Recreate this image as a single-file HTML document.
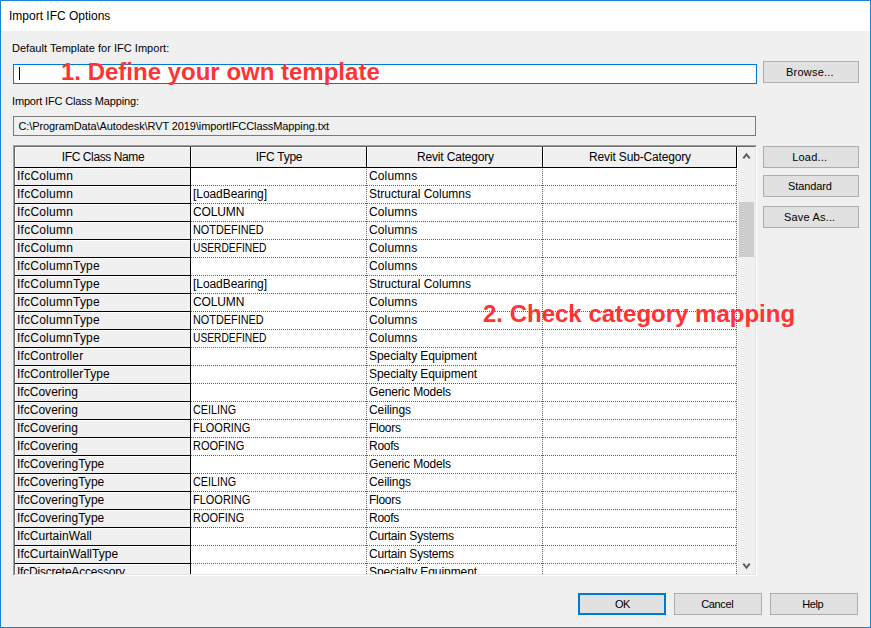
<!DOCTYPE html><html><head><meta charset="utf-8"><title>Import IFC Options</title><style>
html,body{margin:0;padding:0;}
body{width:871px;height:628px;overflow:hidden;background:#f0f0f0;font-family:"Liberation Sans",sans-serif;color:#000;}
.win{position:absolute;left:0;top:0;width:871px;height:628px;background:#f0f0f0;overflow:hidden;}
.win>*{position:absolute;}
.frame{left:0;top:0;width:869px;height:626px;border:1px solid #1883d7;pointer-events:none;z-index:10;}
.titlebar{left:1px;top:1px;width:869px;height:30px;background:#fff;}
.title{position:absolute;left:8px;top:8px;font-size:12px;line-height:14px;white-space:nowrap;}
.lbl{font-size:11px;line-height:14px;white-space:nowrap;}
.input{left:13px;top:64px;width:742px;height:18px;border:1px solid #0078d7;background:#fff;}
.caret{position:absolute;left:5px;top:2px;width:1px;height:13px;background:#000;}
.path{left:13px;top:116px;width:741px;height:18px;border:1px solid #7a7a7a;background:#f0f0f0;font-size:11px;line-height:18px;white-space:nowrap;}
.path span{position:absolute;left:4.5px;top:0;letter-spacing:-0.1px;}
.red{font-weight:bold;font-size:24px;line-height:28px;color:#ff3333;white-space:nowrap;z-index:5;}
.btn{height:22px;border:1px solid #adadad;background:#e1e1e1;font-size:11px;line-height:20px;text-align:center;box-sizing:border-box;}
.btn span{position:relative;display:inline-block;}
.btn.def{border:2px solid #0078d7;line-height:18px;}
.grid{left:13px;top:145px;width:742px;height:429px;border-style:solid;border-width:1px;border-color:#a0a0a0 #fff #fff #a0a0a0;}
.inner{position:absolute;left:0;top:0;width:740px;height:427px;border-style:solid;border-width:1px;border-color:#696969 #e3e3e3 #e3e3e3 #696969;background:#fff;overflow:hidden;}
.inner>*{position:absolute;}
.hdr{top:0;height:20px;background:#f0f0f0;border-right:1px solid #000;border-bottom:1px solid #000;box-shadow:inset 1px 1px 0 #fff;font-size:12px;line-height:20px;text-align:center;white-space:nowrap;}
.hdr span{display:inline-block;}
.row{left:0;width:723px;height:18px;font-size:12px;line-height:17px;white-space:nowrap;}
.row>div{position:absolute;top:0;height:17px;overflow:hidden;}
.row span{display:inline-block;}
.sx{transform-origin:0 50%;}
.c0{left:0;width:173px;padding-left:2px;background:#f0f0f0;border-right:1px solid #000;border-bottom:1px solid #000;box-shadow:inset 1px 1px 0 #fff;}
.c1,.c2{padding-left:2px;}
.c1{left:176px;width:173px;}
.c2{left:352px;width:173px;}
.dots{left:176px;top:21px;}
.sb{left:723px;top:0;width:17px;height:427px;background:#f0f0f0;}
.sb>*{position:absolute;}
.up{left:0;top:0;}
.down{left:0;bottom:-1px;}
.thumb{left:1px;top:55px;width:15px;height:55px;background:#cdcdcd;}

</style></head><body>
<div class="win"><div class="frame"></div>
<div class="titlebar"><span class="title">Import IFC Options</span></div>
<div class="lbl" style="left:12px;top:41px;letter-spacing:0.03px" id="l1">Default Template for IFC Import:</div>
<div class="input"><span class="caret"></span></div>
<div class="red" id="r1" style="left:61px;top:58px;">1. Define your own template</div>
<div class="btn" style="left:763px;top:61px;width:96px;"><span style="letter-spacing:0.2px;left:-1.1px">Browse...</span></div>
<div class="lbl" style="left:12px;top:94px;letter-spacing:-0.16px" id="l2">Import IFC Class Mapping:</div>
<div class="path"><span id="p1">C:\ProgramData\Autodesk\RVT 2019\importIFCClassMapping.txt</span></div>
<div class="grid">
<div class="inner">
<div class="hdr" style="left:0;width:175px;"><span style="letter-spacing:-0.4px;margin-left:1px">IFC Class Name</span></div>
<div class="hdr" style="left:176px;width:175px;"><span style="letter-spacing:-0.24px;margin-left:1px">IFC Type</span></div>
<div class="hdr" style="left:352px;width:175px;"><span style="letter-spacing:-0.18px;margin-left:2px">Revit Category</span></div>
<div class="hdr" style="left:528px;width:193px;"><span style="letter-spacing:-0.16px;margin-left:1px">Revit Sub-Category</span></div>
<div class="row" style="top:21px"><div class="c0"><span style="letter-spacing:0.24px">IfcColumn</span></div><div class="c1"></div><div class="c2"><span style="letter-spacing:0.13px">Columns</span></div></div>
<div class="row" style="top:39px"><div class="c0"><span style="letter-spacing:0.24px">IfcColumn</span></div><div class="c1"><span style="letter-spacing:-0.06px">[LoadBearing]</span></div><div class="c2"><span>Structural Columns</span></div></div>
<div class="row" style="top:57px"><div class="c0"><span style="letter-spacing:0.24px">IfcColumn</span></div><div class="c1"><span style="letter-spacing:-0.14px">COLUMN</span></div><div class="c2"><span style="letter-spacing:0.13px">Columns</span></div></div>
<div class="row" style="top:75px"><div class="c0"><span style="letter-spacing:0.24px">IfcColumn</span></div><div class="c1"><span class="sx" style="transform:scaleX(0.906)">NOTDEFINED</span></div><div class="c2"><span style="letter-spacing:0.13px">Columns</span></div></div>
<div class="row" style="top:93px"><div class="c0"><span style="letter-spacing:0.24px">IfcColumn</span></div><div class="c1"><span class="sx" style="transform:scaleX(0.854)">USERDEFINED</span></div><div class="c2"><span style="letter-spacing:0.13px">Columns</span></div></div>
<div class="row" style="top:111px"><div class="c0"><span style="letter-spacing:0.22px">IfcColumnType</span></div><div class="c1"></div><div class="c2"><span style="letter-spacing:0.13px">Columns</span></div></div>
<div class="row" style="top:129px"><div class="c0"><span style="letter-spacing:0.22px">IfcColumnType</span></div><div class="c1"><span style="letter-spacing:-0.06px">[LoadBearing]</span></div><div class="c2"><span>Structural Columns</span></div></div>
<div class="row" style="top:147px"><div class="c0"><span style="letter-spacing:0.22px">IfcColumnType</span></div><div class="c1"><span style="letter-spacing:-0.14px">COLUMN</span></div><div class="c2"><span style="letter-spacing:0.13px">Columns</span></div></div>
<div class="row" style="top:165px"><div class="c0"><span style="letter-spacing:0.22px">IfcColumnType</span></div><div class="c1"><span class="sx" style="transform:scaleX(0.906)">NOTDEFINED</span></div><div class="c2"><span style="letter-spacing:0.13px">Columns</span></div></div>
<div class="row" style="top:183px"><div class="c0"><span style="letter-spacing:0.22px">IfcColumnType</span></div><div class="c1"><span class="sx" style="transform:scaleX(0.854)">USERDEFINED</span></div><div class="c2"><span style="letter-spacing:0.13px">Columns</span></div></div>
<div class="row" style="top:201px"><div class="c0"><span style="letter-spacing:0.12px">IfcController</span></div><div class="c1"></div><div class="c2"><span style="letter-spacing:-0.07px">Specialty Equipment</span></div></div>
<div class="row" style="top:219px"><div class="c0"><span style="letter-spacing:0.13px">IfcControllerType</span></div><div class="c1"></div><div class="c2"><span style="letter-spacing:-0.07px">Specialty Equipment</span></div></div>
<div class="row" style="top:237px"><div class="c0"><span style="letter-spacing:0.02px">IfcCovering</span></div><div class="c1"></div><div class="c2"><span style="letter-spacing:-0.15px">Generic Models</span></div></div>
<div class="row" style="top:255px"><div class="c0"><span style="letter-spacing:0.02px">IfcCovering</span></div><div class="c1"><span class="sx" style="transform:scaleX(0.896)">CEILING</span></div><div class="c2"><span style="letter-spacing:-0.1px">Ceilings</span></div></div>
<div class="row" style="top:273px"><div class="c0"><span style="letter-spacing:0.02px">IfcCovering</span></div><div class="c1"><span class="sx" style="transform:scaleX(0.915)">FLOORING</span></div><div class="c2"><span style="letter-spacing:-0.28px">Floors</span></div></div>
<div class="row" style="top:291px"><div class="c0"><span style="letter-spacing:0.02px">IfcCovering</span></div><div class="c1"><span class="sx" style="transform:scaleX(0.916)">ROOFING</span></div><div class="c2"><span style="letter-spacing:-0.25px">Roofs</span></div></div>
<div class="row" style="top:309px"><div class="c0"><span style="letter-spacing:0.04px">IfcCoveringType</span></div><div class="c1"></div><div class="c2"><span style="letter-spacing:-0.15px">Generic Models</span></div></div>
<div class="row" style="top:327px"><div class="c0"><span style="letter-spacing:0.04px">IfcCoveringType</span></div><div class="c1"><span class="sx" style="transform:scaleX(0.896)">CEILING</span></div><div class="c2"><span style="letter-spacing:-0.1px">Ceilings</span></div></div>
<div class="row" style="top:345px"><div class="c0"><span style="letter-spacing:0.04px">IfcCoveringType</span></div><div class="c1"><span class="sx" style="transform:scaleX(0.915)">FLOORING</span></div><div class="c2"><span style="letter-spacing:-0.28px">Floors</span></div></div>
<div class="row" style="top:363px"><div class="c0"><span style="letter-spacing:0.04px">IfcCoveringType</span></div><div class="c1"><span class="sx" style="transform:scaleX(0.916)">ROOFING</span></div><div class="c2"><span style="letter-spacing:-0.25px">Roofs</span></div></div>
<div class="row" style="top:381px"><div class="c0"><span style="letter-spacing:0.04px">IfcCurtainWall</span></div><div class="c1"></div><div class="c2"><span style="letter-spacing:-0.21px">Curtain Systems</span></div></div>
<div class="row" style="top:399px"><div class="c0"><span style="letter-spacing:0.06px">IfcCurtainWallType</span></div><div class="c1"></div><div class="c2"><span style="letter-spacing:-0.21px">Curtain Systems</span></div></div>
<div class="row" style="top:417px"><div class="c0"><span style="letter-spacing:-0.21px">IfcDiscreteAccessory</span></div><div class="c1"></div><div class="c2"><span style="letter-spacing:-0.07px">Specialty Equipment</span></div></div>
<svg class="dots" width="547" height="406" viewBox="0 0 547 406" shape-rendering="crispEdges"><g stroke="#606060" stroke-width="1" stroke-dasharray="1 1" fill="none"><line x1="0" y1="17.5" x2="546" y2="17.5"/><line x1="0" y1="35.5" x2="546" y2="35.5"/><line x1="0" y1="53.5" x2="546" y2="53.5"/><line x1="0" y1="71.5" x2="546" y2="71.5"/><line x1="0" y1="89.5" x2="546" y2="89.5"/><line x1="0" y1="107.5" x2="546" y2="107.5"/><line x1="0" y1="125.5" x2="546" y2="125.5"/><line x1="0" y1="143.5" x2="546" y2="143.5"/><line x1="0" y1="161.5" x2="546" y2="161.5"/><line x1="0" y1="179.5" x2="546" y2="179.5"/><line x1="0" y1="197.5" x2="546" y2="197.5"/><line x1="0" y1="215.5" x2="546" y2="215.5"/><line x1="0" y1="233.5" x2="546" y2="233.5"/><line x1="0" y1="251.5" x2="546" y2="251.5"/><line x1="0" y1="269.5" x2="546" y2="269.5"/><line x1="0" y1="287.5" x2="546" y2="287.5"/><line x1="0" y1="305.5" x2="546" y2="305.5"/><line x1="0" y1="323.5" x2="546" y2="323.5"/><line x1="0" y1="341.5" x2="546" y2="341.5"/><line x1="0" y1="359.5" x2="546" y2="359.5"/><line x1="0" y1="377.5" x2="546" y2="377.5"/><line x1="0" y1="395.5" x2="546" y2="395.5"/><line x1="175.5" y1="1" x2="175.5" y2="406"/><line x1="351.5" y1="1" x2="351.5" y2="406"/><line x1="545.5" y1="1" x2="545.5" y2="406"/></g></svg>
<div class="sb"><svg class="up" width="17" height="17" viewBox="0 0 17 17"><path d="M5.3 11.4 L8.5 7.4 L11.7 11.4" fill="none" stroke="#606060" stroke-width="2"/></svg><div class="thumb"></div><svg class="down" width="17" height="17" viewBox="0 0 17 17"><path d="M5.3 5.6 L8.5 9.6 L11.7 5.6" fill="none" stroke="#606060" stroke-width="2"/></svg></div>
</div></div>
<div class="red" id="r2" style="left:483px;top:300px;">2. Check category mapping</div>
<div class="btn" style="left:763px;top:146px;width:96px;"><span style="letter-spacing:0.18px;left:-1.3px">Load...</span></div>
<div class="btn" style="left:763px;top:175px;width:96px;"><span style="letter-spacing:-0.11px;left:-1px">Standard</span></div>
<div class="btn" style="left:763px;top:206px;width:96px;"><span style="letter-spacing:0.18px;left:-1.3px">Save As...</span></div>
<div class="btn def" style="left:578px;top:593px;width:88px;"><span style="letter-spacing:-0.6px;left:0.3px">OK</span></div>
<div class="btn" style="left:674px;top:593px;width:88px;"><span style="letter-spacing:-0.34px;left:-0.7px">Cancel</span></div>
<div class="btn" style="left:770px;top:593px;width:88px;"><span style="letter-spacing:-0.43px;left:-1.3px">Help</span></div>
</div></body></html>
